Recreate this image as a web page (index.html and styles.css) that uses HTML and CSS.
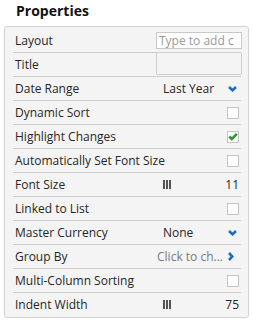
FILE: index.html
```html
<!DOCTYPE html>
<html lang="en">
<head>
    <meta charset="UTF-8">
    <title>Properties</title>
    <link rel="stylesheet" href="styles.css">
</head>
<body>
    <h2 class="panel-title">Properties</h2>

    <div class="props">
        <div class="prop-row">
            <span class="prop-label">Layout</span>
            <input type="text" class="text-input" placeholder="Type to add c">
        </div>
        <div class="prop-row">
            <span class="prop-label">Title</span>
            <div class="text-area"></div>
        </div>
        <div class="prop-row">
            <span class="prop-label">Date Range</span>
            <div class="prop-value dropdown">
                <span>Last Year</span>
                <svg class="chevron" width="9" height="6" viewBox="0 0 9 6"><polyline points="1,1 4.5,4.3 8,1" fill="none" stroke="#1a6fc4" stroke-width="2.6"/></svg>
            </div>
        </div>
        <div class="prop-row">
            <span class="prop-label">Dynamic Sort</span>
            <div class="prop-value"><span class="checkbox"></span></div>
        </div>
        <div class="prop-row">
            <span class="prop-label">Highlight Changes</span>
            <div class="prop-value">
                <span class="checkbox">
                    <svg width="10" height="9" viewBox="0 0 10 9"><polyline points="1.3,4.5 3.8,7 8.8,1.8" fill="none" stroke="#2a952a" stroke-width="2.5"/></svg>
                </span>
            </div>
        </div>
        <div class="prop-row">
            <span class="prop-label">Automatically Set Font Size</span>
            <div class="prop-value"><span class="checkbox"></span></div>
        </div>
        <div class="prop-row">
            <span class="prop-label">Font Size</span>
            <div class="prop-value slider">
                <span class="bars"><i></i><i></i><i></i></span>
                <span>11</span>
            </div>
        </div>
        <div class="prop-row">
            <span class="prop-label">Linked to List</span>
            <div class="prop-value"><span class="checkbox"></span></div>
        </div>
        <div class="prop-row">
            <span class="prop-label">Master Currency</span>
            <div class="prop-value dropdown">
                <span>None</span>
                <svg class="chevron" width="9" height="6" viewBox="0 0 9 6"><polyline points="1,1 4.5,4.3 8,1" fill="none" stroke="#1a6fc4" stroke-width="2.6"/></svg>
            </div>
        </div>
        <div class="prop-row">
            <span class="prop-label">Group By</span>
            <div class="prop-value link">
                <span>Click to ch...</span>
                <svg class="chevron-right" width="6" height="9" viewBox="0 0 6 9"><polyline points="1,1 4.3,4.5 1,8" fill="none" stroke="#1a6fc4" stroke-width="2.6"/></svg>
            </div>
        </div>
        <div class="prop-row">
            <span class="prop-label">Multi-Column Sorting</span>
            <div class="prop-value"><span class="checkbox"></span></div>
        </div>
        <div class="prop-row">
            <span class="prop-label">Indent Width</span>
            <div class="prop-value slider">
                <span class="bars"><i></i><i></i><i></i></span>
                <span>75</span>
            </div>
        </div>
    </div>
</body>
</html>
```

FILE: styles.css
```css
:root {
    --panel-bg: #f4f4f4;
    --border-color: #d2d2d2;
    --line-color: #cdcdcd;
    --text-color: #262626;
    --muted-color: #7a7a7a;
    --accent-color: #1a6fc4;
}

* {
    margin: 0;
    padding: 0;
    box-sizing: border-box;
}

body {
    background: #ffffff;
    color: var(--text-color);
    font-family: "Open Sans", "Liberation Sans", sans-serif;
    font-size: 12px;
}

.panel-title {
    font-size: 14px;
    font-weight: 700;
    color: #111;
    padding: 1px 0 0 16px;
    height: 26px;
    line-height: 20px;
}

.props {
    margin: 0 4px;
    width: 245px;
    background: var(--panel-bg);
    border: 1px solid var(--border-color);
    border-radius: 3px;
    padding: 2px 7px 1px 8px;
}

.prop-row {
    display: flex;
    align-items: center;
    height: 24px;
    border-bottom: 1px solid var(--line-color);
}

.prop-row:last-child {
    border-bottom: none;
    height: 23px;
}

.prop-label {
    flex: 1;
    padding-left: 2px;
    white-space: nowrap;
}

.prop-value {
    width: 78px;
    display: flex;
    align-items: center;
    justify-content: flex-end;
    padding-right: 2px;
    white-space: nowrap;
}

.dropdown {
    justify-content: space-between;
}

.dropdown .chevron {
    margin-right: 2px;
}

.slider {
    justify-content: space-between;
}

.bars {
    display: flex;
    gap: 1px;
}

.bars i {
    display: block;
    width: 2px;
    height: 9px;
    background: #555;
}

.link {
    width: 86px;
    color: var(--muted-color);
    gap: 5px;
    padding-right: 7px;
}

.checkbox {
    width: 12px;
    height: 12px;
    background: #fff;
    border: 1px solid #c4c4c4;
    display: flex;
    align-items: center;
    justify-content: center;
}

.text-input {
    width: 86px;
    height: 17px;
    margin-right: -1px;
    border: 1px solid #c8c8c8;
    background: #fff;
    font-family: inherit;
    font-size: 12px;
    padding: 0 2px;
    outline: none;
}

.text-input::placeholder {
    color: #9a9a9a;
}

.text-area {
    width: 86px;
    height: 23px;
    margin-right: -1px;
    margin-top: -3px;
    border: 1px solid #cfcfcf;
    border-radius: 2px;
    background: var(--panel-bg);
}
```
